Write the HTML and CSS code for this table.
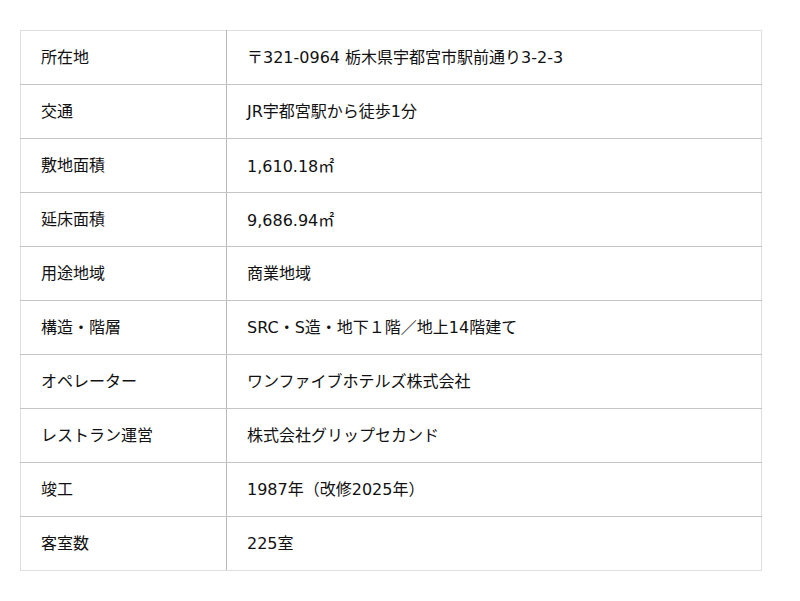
FILE: index.html
```html
<!DOCTYPE html>
<html lang="ja">
<head>
<meta charset="utf-8">
<link rel="stylesheet" href="styles.css">
</head>
<body>
<table class="info">
<tbody>
<tr><th>所在地</th><td>〒321-0964 栃木県宇都宮市駅前通り3-2-3</td></tr>
<tr><th>交通</th><td>JR宇都宮駅から徒歩1分</td></tr>
<tr><th>敷地面積</th><td>1,610.18<span class="unit">㎡</span></td></tr>
<tr><th>延床面積</th><td>9,686.94<span class="unit">㎡</span></td></tr>
<tr><th>用途地域</th><td>商業地域</td></tr>
<tr><th>構造・階層</th><td>SRC・S造・地下１階／地上14階建て</td></tr>
<tr><th>オペレーター</th><td>ワンファイブホテルズ株式会社</td></tr>
<tr><th>レストラン運営</th><td>株式会社グリップセカンド</td></tr>
<tr><th>竣工</th><td>1987年（改修2025年）</td></tr>
<tr><th>客室数</th><td>225室</td></tr>
</tbody>
</table>
</body>
</html>
```
FILE: styles.css
```css
html, body {
  margin: 0;
  background: #fff;
}
body {
  padding: 30px 38px 0 20px;
  font-family: "DejaVu Sans", "Noto Sans CJK JP", sans-serif;
  font-size: 16px;
  color: #111;
}
.info {
  width: 742px;
  border-collapse: collapse;
  border: 1px solid #dedede;
}
.info th, .info td {
  height: 53px;
  padding: 0 20px;
  text-align: left;
  font-weight: normal;
  vertical-align: middle;
  border-bottom: 1px solid #c4c4c4;
  line-height: 20px;
}
.info tr:last-child th, .info tr:last-child td {
  border-bottom: 1px solid #dedede;
}
.info th {
  width: 165px;
  border-right: 1px solid #b8b8b8;
}
.unit {
  font-family: "Noto Sans CJK JP", sans-serif;
}
```
